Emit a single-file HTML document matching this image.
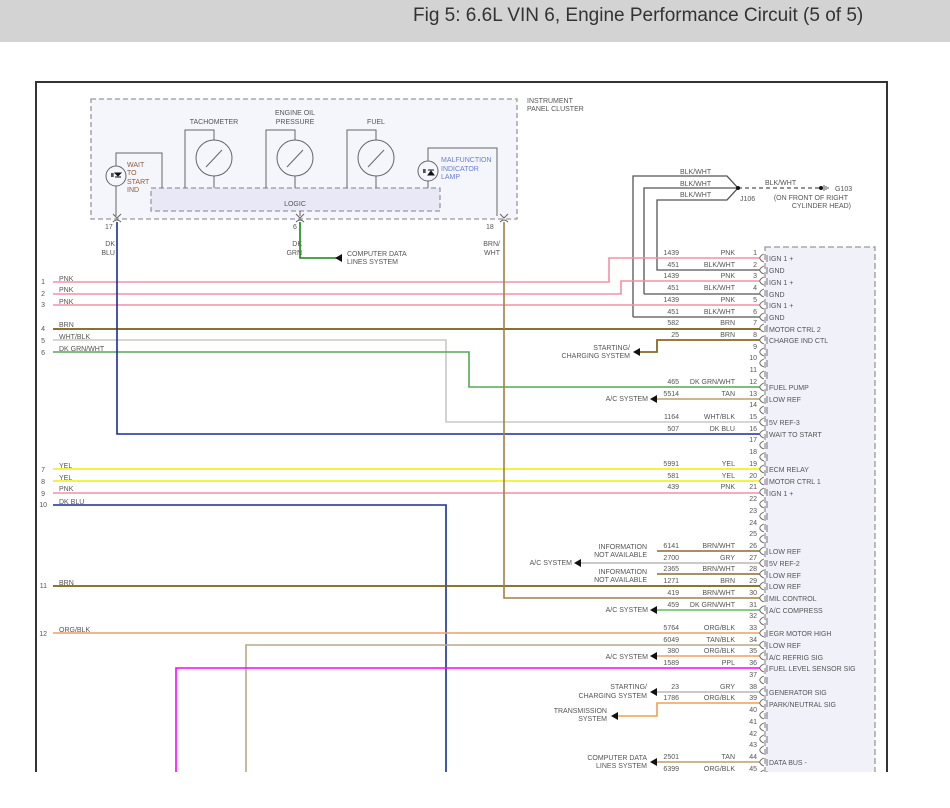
<!DOCTYPE html>
<html><head><meta charset="utf-8"><style>
html,body{margin:0;padding:0;background:#fff;}
body{width:950px;height:808px;overflow:hidden;position:relative;font-family:"Liberation Sans",sans-serif;}
.hdr{position:absolute;left:0;top:0;width:950px;height:42px;background:#d3d3d3;}
.hdr span{position:absolute;left:413px;top:5px;font-family:"Liberation Sans Narrow","Liberation Sans",sans-serif;font-size:19px;color:#333;white-space:nowrap;}
svg{position:absolute;left:0;top:0;}
text{font-family:"Liberation Sans",sans-serif;font-size:7px;fill:#555;}
.e{text-anchor:end}
.m{text-anchor:middle}
.f{fill:#444}
</style></head><body>
<div class="hdr"><span>Fig 5: 6.6L VIN 6, Engine Performance Circuit (5 of 5)</span></div>
<svg width="950" height="808" viewBox="0 0 950 808">
<defs>
<g id="s"><path d="M764 -4 Q759 -2 760 1 Q761 3 764 4" fill="none" stroke="#666" stroke-width="0.9"/><line x1="767" y1="-3" x2="767" y2="4" stroke="#666" stroke-width="0.9"/></g>
<path id="ar" d="M0 0 L7 -4 L7 4 Z" fill="#111"/>
</defs>
<!-- frame -->
<path d="M36 772 V82 H887 V772" fill="none" stroke="#333" stroke-width="2"/>
<!-- cluster -->
<rect x="91" y="99" width="426" height="120" fill="#f5f5fc" stroke="#999" stroke-width="1.3" stroke-dasharray="5,3"/>
<text x="527" y="103">INSTRUMENT</text><text x="527" y="111">PANEL CLUSTER</text>
<rect x="151" y="188" width="289" height="23" fill="#e8e8f6" stroke="#999" stroke-width="1.3" stroke-dasharray="5,3"/>
<text x="295" y="206" class="m">LOGIC</text>
<g fill="none" stroke="#666" stroke-width="1">
<path d="M185 188 V130 H214 V140 M214 176 V188"/><circle cx="214" cy="158" r="18"/><line x1="206" y1="167" x2="222" y2="150"/>
<path d="M266 188 V130 H295 V140 M295 176 V188"/><circle cx="295" cy="158" r="18"/><line x1="287" y1="167" x2="303" y2="150"/>
<path d="M347 188 V130 H376 V140 M376 176 V188"/><circle cx="376" cy="158" r="18"/><line x1="368" y1="167" x2="384" y2="150"/>
<path d="M162 188 V153 H116 V166 M116 186 V216"/><circle cx="116" cy="176" r="10"/>
<path d="M428 188 V181 M428 161 V148 H497 V216"/><circle cx="428" cy="171" r="10"/>
<path d="M300 211 V216"/>
<path d="M113 214 L117 218 L121 214 M296 214 L300 218 L304 214 M500 214 L504 218 L508 214"/>
<path d="M113 222 Q117 218 121 222 M296 222 Q300 218 304 222 M500 222 Q504 218 508 222"/>
</g>
<path d="M111 176 h3 M111 174 h3 M112 173 v4 M115 173 l3 3 l3 -3 Z M115 177 h6" stroke="#111" stroke-width="0.9" fill="#111"/>
<path d="M423 172 h3 M423 170 h3 M424 169 v4 M428 175 l3 -4 l3 4 Z M428 170 h6" stroke="#111" stroke-width="0.9" fill="#111"/>
<text x="214" y="124" class="m">TACHOMETER</text>
<text x="295" y="115" class="m">ENGINE OIL</text><text x="295" y="124" class="m">PRESSURE</text>
<text x="376" y="124" class="m">FUEL</text>
<g style="fill:#9a6a3a"><text x="127" y="167" style="fill:#8a6040">WAIT</text><text x="127" y="175" style="fill:#8a6040">TO</text><text x="127" y="184" style="fill:#8a6040">START</text><text x="127" y="192" style="fill:#8a6040">IND</text></g>
<text x="441" y="162" style="fill:#6a80d0">MALFUNCTION</text><text x="441" y="171" style="fill:#6a80d0">INDICATOR</text><text x="441" y="179" style="fill:#6a80d0">LAMP</text>
<text x="105" y="229">17</text><text x="293" y="229">6</text><text x="486" y="229">18</text>
<text x="115" y="246" class="e">DK</text><text x="115" y="255" class="e">BLU</text>
<text x="302" y="246" class="e">DK</text><text x="302" y="255" class="e">GRN</text>
<text x="500" y="246" class="e">BRN/</text><text x="500" y="255" class="e">WHT</text>
<!-- ground -->
<g fill="none" stroke="#555" stroke-width="1.3">
<path d="M633 317 V176 H727 L738 188 L727 200 H657 V270 H760"/>
<path d="M644 294 V188 H738"/>
<path d="M633 317 H760 M644 294 H760"/>
</g>
<line x1="738" y1="188" x2="821" y2="188" stroke="#555" stroke-width="1.3" stroke-dasharray="4,3"/>
<circle cx="738" cy="188" r="2" fill="#111"/><circle cx="821" cy="188" r="2" fill="#111"/>
<path d="M824 185 v6 M826 186 v4 M828 187 v2" stroke="#555"/>
<text x="680" y="174">BLK/WHT</text><text x="680" y="186">BLK/WHT</text><text x="680" y="197">BLK/WHT</text>
<text x="765" y="185">BLK/WHT</text><text x="835" y="191">G103</text><text x="740" y="201">J106</text>
<text x="848" y="200" class="e">(ON FRONT OF RIGHT</text><text x="851" y="208" class="e">CYLINDER HEAD)</text>
<!-- connector -->
<rect x="765" y="247" width="110" height="540" fill="#f1f1fa" stroke="#999" stroke-width="1.3" stroke-dasharray="6,3"/>
<!-- wires -->
<g fill="none" stroke-width="1.6">
<path d="M53 282 H609 V258 H760" stroke="#f48fa8"/>
<path d="M53 294 H621 V281 H760" stroke="#f48fa8"/>
<path d="M53 305 H760" stroke="#f48fa8"/>
<path d="M53 329 H760" stroke="#8b7030" stroke-width="2"/>
<path d="M760 340 H657 V352 H640" stroke="#8b6a20" stroke-width="1.8"/>
<path d="M53 340 H446 V422 H760" stroke="#c8c8c8"/>
<path d="M53 352 H469 V387 H760" stroke="#55a855"/>
<path d="M760 399 H656" stroke="#b8a070"/>
<path d="M117 222 V434 H760" stroke="#1a2d9a"/>
<path d="M53 469 H760" stroke="#f0f000"/>
<path d="M53 481 H760" stroke="#f0f000"/>
<path d="M53 493 H760" stroke="#f48fa8"/>
<path d="M53 505 H446 V772" stroke="#1a2d9a"/>
<path d="M53 586 H760" stroke="#7a6210" stroke-width="1.8"/>
<path d="M504 222 V598 H760" stroke="#a08040"/>
<path d="M53 633 H760" stroke="#f0a060"/>
<path d="M760 645 H246 V772" stroke="#b8a888"/>
<path d="M760 668 H176 V772" stroke="#ff00ff"/>
<path d="M300 222 V258 H338" stroke="#118811"/>
<path d="M657 551 H760 M657 574 H760" stroke="#8b6a30"/>
<path d="M760 563 H580" stroke="#b8b8b8"/>
<path d="M760 610 H656" stroke="#66b866"/>
<path d="M760 656 H656" stroke="#f0a060"/>
<path d="M760 692 H656" stroke="#b8b8b8"/>
<path d="M760 703 H657 V716 H617" stroke="#f0a050"/>
<path d="M760 762 H656" stroke="#b8a070"/>
</g>
<use href="#ar" x="335" y="258"/><use href="#ar" x="633" y="352"/><use href="#ar" x="650" y="399"/>
<use href="#ar" x="574" y="563"/><use href="#ar" x="650" y="610"/><use href="#ar" x="650" y="656"/>
<use href="#ar" x="650" y="692"/><use href="#ar" x="611" y="716"/><use href="#ar" x="650" y="762"/>
<text x="347" y="256">COMPUTER DATA</text><text x="347" y="264">LINES SYSTEM</text>
<text x="630" y="350" class="e">STARTING/</text><text x="630" y="358" class="e">CHARGING SYSTEM</text>
<text x="648" y="401" class="e">A/C SYSTEM</text>
<text x="647" y="549" class="e">INFORMATION</text><text x="647" y="557" class="e">NOT AVAILABLE</text>
<text x="572" y="565" class="e">A/C SYSTEM</text>
<text x="647" y="574" class="e">INFORMATION</text><text x="647" y="582" class="e">NOT AVAILABLE</text>
<text x="648" y="612" class="e">A/C SYSTEM</text><text x="648" y="659" class="e">A/C SYSTEM</text>
<text x="647" y="689" class="e">STARTING/</text><text x="647" y="698" class="e">CHARGING SYSTEM</text>
<text x="607" y="713" class="e">TRANSMISSION</text><text x="607" y="721" class="e">SYSTEM</text>
<text x="647" y="760" class="e">COMPUTER DATA</text><text x="647" y="768" class="e">LINES SYSTEM</text>
<!-- left labels -->
<g><text x="45" y="284" class="e">1</text><text x="59" y="281">PNK</text>
<text x="45" y="296" class="e">2</text><text x="59" y="292">PNK</text>
<text x="45" y="307" class="e">3</text><text x="59" y="304">PNK</text>
<text x="45" y="331" class="e">4</text><text x="59" y="327">BRN</text>
<text x="45" y="343" class="e">5</text><text x="59" y="339">WHT/BLK</text>
<text x="45" y="355" class="e">6</text><text x="59" y="351">DK GRN/WHT</text>
<text x="45" y="472" class="e">7</text><text x="59" y="468">YEL</text>
<text x="45" y="484" class="e">8</text><text x="59" y="480">YEL</text>
<text x="45" y="496" class="e">9</text><text x="59" y="491">PNK</text>
<text x="47" y="507" class="e">10</text><text x="59" y="504">DK BLU</text>
<text x="47" y="588" class="e">11</text><text x="59" y="585">BRN</text>
<text x="47" y="636" class="e">12</text><text x="59" y="632">ORG/BLK</text></g>
<!-- sockets -->
<g>
<use href="#s" y="258"/><use href="#s" y="270"/><use href="#s" y="281"/><use href="#s" y="293"/><use href="#s" y="305"/><use href="#s" y="317"/><use href="#s" y="328"/><use href="#s" y="340"/><use href="#s" y="352"/><use href="#s" y="363"/><use href="#s" y="375"/><use href="#s" y="387"/><use href="#s" y="399"/><use href="#s" y="410"/><use href="#s" y="422"/><use href="#s" y="434"/><use href="#s" y="445"/><use href="#s" y="457"/><use href="#s" y="469"/><use href="#s" y="481"/><use href="#s" y="492"/><use href="#s" y="504"/><use href="#s" y="516"/><use href="#s" y="528"/><use href="#s" y="539"/><use href="#s" y="551"/><use href="#s" y="563"/><use href="#s" y="574"/><use href="#s" y="586"/><use href="#s" y="598"/><use href="#s" y="610"/><use href="#s" y="621"/><use href="#s" y="633"/><use href="#s" y="645"/><use href="#s" y="656"/><use href="#s" y="668"/><use href="#s" y="680"/><use href="#s" y="692"/><use href="#s" y="703"/><use href="#s" y="715"/><use href="#s" y="727"/><use href="#s" y="739"/><use href="#s" y="750"/><use href="#s" y="762"/><use href="#s" y="774"/>
</g>
<!-- pin numbers -->
<g class="e" style="text-anchor:end">
<text x="757" y="255" class="e">1</text><text x="757" y="267" class="e">2</text><text x="757" y="278" class="e">3</text><text x="757" y="290" class="e">4</text><text x="757" y="302" class="e">5</text><text x="757" y="314" class="e">6</text><text x="757" y="325" class="e">7</text><text x="757" y="337" class="e">8</text><text x="757" y="349" class="e">9</text><text x="757" y="360" class="e">10</text><text x="757" y="372" class="e">11</text><text x="757" y="384" class="e">12</text><text x="757" y="396" class="e">13</text><text x="757" y="407" class="e">14</text><text x="757" y="419" class="e">15</text><text x="757" y="431" class="e">16</text><text x="757" y="442" class="e">17</text><text x="757" y="454" class="e">18</text><text x="757" y="466" class="e">19</text><text x="757" y="478" class="e">20</text><text x="757" y="489" class="e">21</text><text x="757" y="501" class="e">22</text><text x="757" y="513" class="e">23</text><text x="757" y="525" class="e">24</text><text x="757" y="536" class="e">25</text><text x="757" y="548" class="e">26</text><text x="757" y="560" class="e">27</text><text x="757" y="571" class="e">28</text><text x="757" y="583" class="e">29</text><text x="757" y="595" class="e">30</text><text x="757" y="607" class="e">31</text><text x="757" y="618" class="e">32</text><text x="757" y="630" class="e">33</text><text x="757" y="642" class="e">34</text><text x="757" y="653" class="e">35</text><text x="757" y="665" class="e">36</text><text x="757" y="677" class="e">37</text><text x="757" y="689" class="e">38</text><text x="757" y="700" class="e">39</text><text x="757" y="712" class="e">40</text><text x="757" y="724" class="e">41</text><text x="757" y="736" class="e">42</text><text x="757" y="747" class="e">43</text><text x="757" y="759" class="e">44</text><text x="757" y="771" class="e">45</text>
</g>
<!-- circuit nums & colors -->
<g>
<text x="679" y="255" class="e">1439</text><text x="735" y="255" class="e">PNK</text>
<text x="679" y="267" class="e">451</text><text x="735" y="267" class="e">BLK/WHT</text>
<text x="679" y="278" class="e">1439</text><text x="735" y="278" class="e">PNK</text>
<text x="679" y="290" class="e">451</text><text x="735" y="290" class="e">BLK/WHT</text>
<text x="679" y="302" class="e">1439</text><text x="735" y="302" class="e">PNK</text>
<text x="679" y="314" class="e">451</text><text x="735" y="314" class="e">BLK/WHT</text>
<text x="679" y="325" class="e">582</text><text x="735" y="325" class="e">BRN</text>
<text x="679" y="337" class="e">25</text><text x="735" y="337" class="e">BRN</text>
<text x="679" y="384" class="e">465</text><text x="735" y="384" class="e">DK GRN/WHT</text>
<text x="679" y="396" class="e">5514</text><text x="735" y="396" class="e">TAN</text>
<text x="679" y="419" class="e">1164</text><text x="735" y="419" class="e">WHT/BLK</text>
<text x="679" y="431" class="e">507</text><text x="735" y="431" class="e">DK BLU</text>
<text x="679" y="466" class="e">5991</text><text x="735" y="466" class="e">YEL</text>
<text x="679" y="478" class="e">581</text><text x="735" y="478" class="e">YEL</text>
<text x="679" y="489" class="e">439</text><text x="735" y="489" class="e">PNK</text>
<text x="679" y="548" class="e">6141</text><text x="735" y="548" class="e">BRN/WHT</text>
<text x="679" y="560" class="e">2700</text><text x="735" y="560" class="e">GRY</text>
<text x="679" y="571" class="e">2365</text><text x="735" y="571" class="e">BRN/WHT</text>
<text x="679" y="583" class="e">1271</text><text x="735" y="583" class="e">BRN</text>
<text x="679" y="595" class="e">419</text><text x="735" y="595" class="e">BRN/WHT</text>
<text x="679" y="607" class="e">459</text><text x="735" y="607" class="e">DK GRN/WHT</text>
<text x="679" y="630" class="e">5764</text><text x="735" y="630" class="e">ORG/BLK</text>
<text x="679" y="642" class="e">6049</text><text x="735" y="642" class="e">TAN/BLK</text>
<text x="679" y="653" class="e">380</text><text x="735" y="653" class="e">ORG/BLK</text>
<text x="679" y="665" class="e">1589</text><text x="735" y="665" class="e">PPL</text>
<text x="679" y="689" class="e">23</text><text x="735" y="689" class="e">GRY</text>
<text x="679" y="700" class="e">1786</text><text x="735" y="700" class="e">ORG/BLK</text>
<text x="679" y="759" class="e">2501</text><text x="735" y="759" class="e">TAN</text>
<text x="679" y="771" class="e">6399</text><text x="735" y="771" class="e">ORG/BLK</text>
</g>
<!-- functions -->
<g>
<text x="769" y="261">IGN 1 +</text><text x="769" y="273">GND</text><text x="769" y="285">IGN 1 +</text><text x="769" y="297">GND</text><text x="769" y="308">IGN 1 +</text><text x="769" y="320">GND</text><text x="769" y="332">MOTOR CTRL 2</text><text x="769" y="343">CHARGE IND CTL</text>
<text x="769" y="390">FUEL PUMP</text><text x="769" y="402">LOW REF</text><text x="769" y="425">5V REF-3</text><text x="769" y="437">WAIT TO START</text>
<text x="769" y="472">ECM RELAY</text><text x="769" y="484">MOTOR CTRL 1</text><text x="769" y="496">IGN 1 +</text>
<text x="769" y="554">LOW REF</text><text x="769" y="566">5V REF-2</text><text x="769" y="578">LOW REF</text><text x="769" y="589">LOW REF</text><text x="769" y="601">MIL CONTROL</text><text x="769" y="613">A/C COMPRESS</text>
<text x="769" y="636">EGR MOTOR HIGH</text><text x="769" y="648">LOW REF</text><text x="769" y="660">A/C REFRIG SIG</text><text x="769" y="671">FUEL LEVEL SENSOR SIG</text>
<text x="769" y="695">GENERATOR SIG</text><text x="769" y="707">PARK/NEUTRAL SIG</text><text x="769" y="765">DATA BUS -</text>
</g>
<rect x="0" y="772" width="950" height="36" fill="#fff"/>
</svg>
</body></html>
